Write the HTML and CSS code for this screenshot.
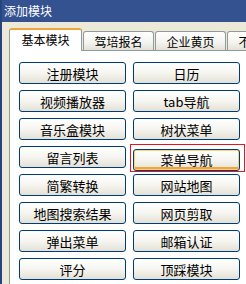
FILE: index.html
```html
<!DOCTYPE html>
<html lang="zh">
<head>
    <meta charset="UTF-8">
    <title>添加模块</title>
    <link rel="stylesheet" href="styles.css">
</head>
<body>
  <div class="window">
    <div class="titlebar">添加模块</div>
    <div class="window-body">
      <div class="tabs">
        <div class="tab active">基本模块</div>
        <div class="tab">驾培报名</div>
        <div class="tab">企业黄页</div>
        <div class="tab">不良信息</div>
      </div>
      <div class="panel">
        <div class="btn-grid">
          <button class="btn">注册模块</button>
          <button class="btn">日历</button>
          <button class="btn">视频播放器</button>
          <button class="btn">tab导航</button>
          <button class="btn">音乐盒模块</button>
          <button class="btn">树状菜单</button>
          <button class="btn">留言列表</button>
          <div class="selected">
            <button class="btn hover">菜单导航</button>
            <span class="mark"></span>
          </div>
          <button class="btn">简繁转换</button>
          <button class="btn">网站地图</button>
          <button class="btn">地图搜索结果</button>
          <button class="btn">网页剪取</button>
          <button class="btn">弹出菜单</button>
          <button class="btn">邮箱认证</button>
          <button class="btn">评分</button>
          <button class="btn">顶踩模块</button>
        </div>
      </div>
    </div>
  </div>
</body>
</html>
```

FILE: styles.css
```css
body {
  margin: 0;
  width: 246px;
  height: 284px;
  overflow: hidden;
  background: #ece9d8;
  font-family: "Noto Sans CJK SC", "DejaVu Sans", sans-serif;
}

.window {
  height: 284px;
  border-left: 2px solid #24457f;
  background: #ece9d8;
}

.titlebar {
  height: 22px;
  line-height: 21px;
  padding-left: 2px;
  background: #33528f;
  color: #fff;
  font-size: 12px;
}

.window-body {
  padding: 6px 0 0 7px;
}

.tabs {
  display: flex;
  align-items: flex-end;
  height: 22px;
  position: relative;
  z-index: 1;
}

.tab {
  flex: none;
  width: 69px;
  height: 18px;
  margin-left: 1px;
  border: 1px solid #919b9c;
  border-bottom: none;
  border-radius: 3px 3px 0 0;
  background: linear-gradient(#fff, #f3f3ef 60%, #e2e2da);
  font-size: 12px;
  line-height: 19px;
  text-align: center;
  white-space: nowrap;
  color: #000;
}

.tab.active {
  margin-left: 0;
  width: 71px;
  height: 20px;
  border-top: 2px solid #f0a43c;
  background: #fff;
  line-height: 19px;
  padding-bottom: 1px;
  margin-bottom: -1px;
}

.panel {
  height: 240px;
  border: 1px solid #919b9c;
  border-right: none;
  background: #fff;
  padding: 11px 0 0 9px;
}

.btn-grid {
  display: grid;
  grid-template-columns: 107px 107px;
  grid-auto-rows: 22px;
  column-gap: 7px;
  row-gap: 6px;
}

.btn {
  height: 22px;
  width: 107px;
  padding: 0;
  border: 1px solid #003c74;
  border-radius: 3px;
  background: linear-gradient(#fff, #f6f5f0 50%, #e3e1d6);
  font-family: "Noto Sans CJK SC", "DejaVu Sans", sans-serif;
  font-size: 13px;
  line-height: 19px;
  color: #000;
}

.btn.hover {
  box-shadow: inset 0 0 0 1px #fbd57a, inset 0 -2px 0 1px #f0a43c;
}

.selected {
  position: relative;
}

.mark {
  position: absolute;
  left: -3px;
  right: -5px;
  top: -2px;
  bottom: -4px;
  border: 1px solid #e8161c;
}
```
